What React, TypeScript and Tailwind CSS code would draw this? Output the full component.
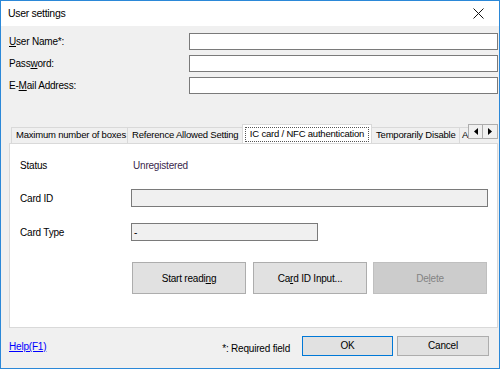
import React from "react";

const font = { fontFamily: '"Liberation Sans", Arial, sans-serif' };

const Field: React.FC<{ label: React.ReactNode }> = ({ label }) => (
  <div className="flex items-center h-[17px]">
    <div className="w-[188px] pl-[8px] text-[10px] tracking-[-0.2px] text-black">{label}</div>
    <div className="flex-1 h-[17px] bg-white border border-[#7a7a7a] mr-[1px]" />
  </div>
);

const Tab: React.FC<{ label: string; active?: boolean; w: string; pad?: string }> = ({ label, active, w, pad = "pl-[4px]" }) => {
  if (active) {
    return (
      <div className={`relative z-10 -mb-[1px] h-[20px] shrink-0 bg-white border border-b-0 border-[#d9d9d9] px-[2px] pt-[2px] -mx-[1px] ${w}`}>
        <div className="h-[15px] border border-dotted border-[#555] flex items-center justify-center whitespace-nowrap text-[9.5px] tracking-[-0.2px] text-black">
          {label}
        </div>
      </div>
    );
  }
  return (
    <div className={`mt-[3px] h-[16px] shrink-0 bg-[#f0f0f0] border border-b-0 border-r-0 border-[#d9d9d9] flex items-center whitespace-nowrap text-[9.5px] tracking-[-0.2px] text-black ${pad} ${w}`}>
      {label}
    </div>
  );
};

const Btn: React.FC<{ children: React.ReactNode; disabled?: boolean; primary?: boolean; className?: string }> = ({
  children,
  disabled,
  primary,
  className = "",
}) => (
  <div
    className={`flex items-center justify-center text-[10px] tracking-[-0.2px] border ${
      disabled
        ? "bg-[#cccccc] border-[#bfbfbf] text-[#838383]"
        : primary
        ? "bg-[#e1e1e1] border-[#0078d7] text-black"
        : "bg-[#e1e1e1] border-[#adadad] text-black"
    } ${className}`}
  >
    {children}
  </div>
);

export default function App() {
  return (
    <div style={font} className="w-[500px] h-[369px] border border-[#2b88d8] bg-[#f0f0f0] flex flex-col overflow-hidden">
      {/* title bar */}
      <div className="h-[25px] bg-white flex items-center justify-between pl-[7px] pr-[15px] shrink-0">
        <span className="text-[10.5px] tracking-[-0.3px] text-black">User settings</span>
        <svg width="11" height="11" viewBox="0 0 11 11">
          <path d="M0.5 0.5 L10.5 10.5 M10.5 0.5 L0.5 10.5" stroke="#111" strokeWidth="1" />
        </svg>
      </div>

      {/* fields */}
      <div className="flex flex-col gap-[5px] mt-[7px]">
        <Field label={<><span className="underline">U</span>ser Name*:</>} />
        <Field label={<>Pass<span className="underline">w</span>ord:</>} />
        <Field label={<>E-<span className="underline">M</span>ail Address:</>} />
      </div>

      {/* tabs */}
      <div className="mt-[29px] ml-[10px] mr-[1px] flex items-end h-[20px]">
        <div className="flex-1 flex items-end overflow-hidden h-[20px]">
          <Tab label="Maximum number of boxes" w="w-[116px]" />
          <Tab label="Reference Allowed Setting" w="w-[116px]" />
          <Tab label="IC card / NFC authentication" w="w-[130px]" active />
          <Tab label="Temporarily Disable" w="w-[88px]" />
          <Tab label="A" w="w-[9px]" pad="pl-[2px]" />
        </div>
        <div className="flex self-start mt-[1px]">
          <div className="w-[15px] h-[15px] bg-[#f0f0f0] border border-[#adadad] flex items-center justify-center">
            <svg width="4" height="7" viewBox="0 0 4 7"><path d="M4 0 L0 3.5 L4 7 Z" fill="#000" /></svg>
          </div>
          <div className="w-[15px] h-[15px] bg-[#f0f0f0] border border-l-0 border-[#adadad] flex items-center justify-center">
            <svg width="4" height="7" viewBox="0 0 4 7"><path d="M0 0 L4 3.5 L0 7 Z" fill="#000" /></svg>
          </div>
        </div>
      </div>

      {/* tab panel */}
      <div className="ml-[8px] mr-[1px] h-[185px] bg-white border border-[#d9d9d9] flex flex-col text-[10px] tracking-[-0.2px] text-black">
        <div className="flex items-center mt-[13px] h-[16px]">
          <div className="w-[121px] pl-[10px]">Status</div>
          <div className="pl-[2px] text-[#3a1f4c]">Unregistered</div>
        </div>
        <div className="flex items-center mt-[16px]">
          <div className="w-[121px] pl-[10px]">Card ID</div>
          <div className="w-[357px] h-[18px] bg-[#f0f0f0] border border-[#7a7a7a]" />
        </div>
        <div className="flex items-center mt-[16px]">
          <div className="w-[121px] pl-[10px]">Card Type</div>
          <div className="w-[187px] h-[18px] bg-[#f0f0f0] border border-[#7a7a7a] flex items-center pl-[2px]">-</div>
        </div>
        <div className="flex mt-[21px] ml-[122px]">
          <Btn className="w-[114px] h-[32px]">
            Start readi<span className="underline">n</span>g
          </Btn>
          <Btn className="w-[114px] h-[32px] ml-[7px]">
            Ca<span className="underline">r</span>d ID Input...
          </Btn>
          <Btn className="w-[114px] h-[32px] ml-[6px]" disabled>
            De<span className="underline">l</span>ete
          </Btn>
        </div>
      </div>

      {/* bottom */}
      <div className="flex items-center mt-[7px] h-[21px] text-[10px] tracking-[-0.2px]">
        <span className="ml-[8px] mt-[2px] text-[#0000ff] underline">Help(F1)</span>
        <span className="ml-auto mr-[12px] mt-[6px] text-black">*: Required field</span>
        <Btn primary className="w-[91px] h-[20px]">OK</Btn>
        <Btn className="w-[92px] h-[20px] ml-[4px] mr-[10px]">Cancel</Btn>
      </div>
    </div>
  );
}
